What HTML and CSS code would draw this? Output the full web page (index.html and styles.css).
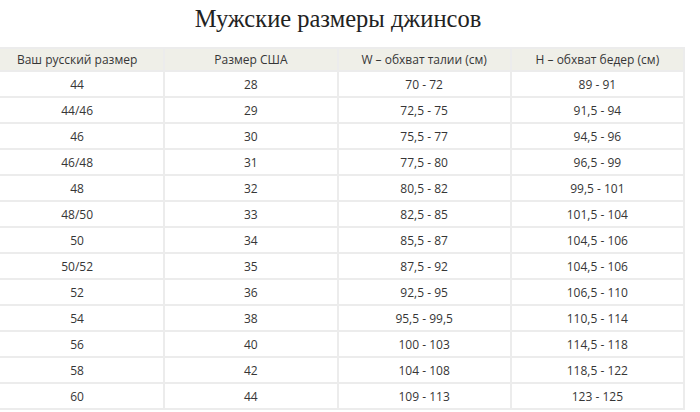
FILE: index.html
```html
<!DOCTYPE html>
<html lang="ru">
<head>
<meta charset="utf-8">
<title>Мужские размеры джинсов</title>
<link rel="stylesheet" href="styles.css">
</head>
<body>
<div class="wrap">
  <h1 class="title">Мужские размеры джинсов</h1>
  <table class="sizes">
    <thead>
      <tr><th>Ваш русский размер</th><th>Размер США</th><th>W – обхват талии (см)</th><th>H – обхват бедер (см)</th></tr>
    </thead>
    <tbody>
      <tr><td>44</td><td>28</td><td>70 - 72</td><td>89 - 91</td></tr>
      <tr><td>44/46</td><td>29</td><td>72,5 - 75</td><td>91,5 - 94</td></tr>
      <tr><td>46</td><td>30</td><td>75,5 - 77</td><td>94,5 - 96</td></tr>
      <tr><td>46/48</td><td>31</td><td>77,5 - 80</td><td>96,5 - 99</td></tr>
      <tr><td>48</td><td>32</td><td>80,5 - 82</td><td>99,5 - 101</td></tr>
      <tr><td>48/50</td><td>33</td><td>82,5 - 85</td><td>101,5 - 104</td></tr>
      <tr><td>50</td><td>34</td><td>85,5 - 87</td><td>104,5 - 106</td></tr>
      <tr><td>50/52</td><td>35</td><td>87,5 - 92</td><td>104,5 - 106</td></tr>
      <tr><td>52</td><td>36</td><td>92,5 - 95</td><td>106,5 - 110</td></tr>
      <tr><td>54</td><td>38</td><td>95,5 - 99,5</td><td>110,5 - 114</td></tr>
      <tr><td>56</td><td>40</td><td>100 - 103</td><td>114,5 - 118</td></tr>
      <tr><td>58</td><td>42</td><td>104 - 108</td><td>118,5 - 122</td></tr>
      <tr><td>60</td><td>44</td><td>109 - 113</td><td>123 - 125</td></tr>
    </tbody>
  </table>
</div>
</body>
</html>
```

FILE: styles.css
```css
html, body {
  margin: 0;
  padding: 0;
  background: #ffffff;
  overflow: hidden;
}

.wrap {
  width: 694px;
  margin-left: -9px;
}

.title {
  margin: 0;
  height: 47px;
  padding-top: 4px;
  box-sizing: border-box;
  text-align: center;
  font-family: "Liberation Serif", "DejaVu Serif", serif;
  font-weight: normal;
  font-size: 24.5px;
  line-height: 30px;
  color: #222222;
}

.sizes {
  width: 694px;
  border-collapse: collapse;
  table-layout: fixed;
  font-family: "Open Sans", "Noto Sans", sans-serif;
  font-size: 12px;
  color: #363636;
}

.sizes th,
.sizes td {
  border: 2px solid #ececec;
  padding: 0;
  text-align: center;
  font-weight: normal;
}

.sizes th {
  background: #efefe8;
  height: 21px;
  line-height: 21px;
}

.sizes td {
  height: 22px;
  padding-top: 2px;
  line-height: 22px;
}

.sizes tr > *:first-child {
  border-left: none;
}
```
